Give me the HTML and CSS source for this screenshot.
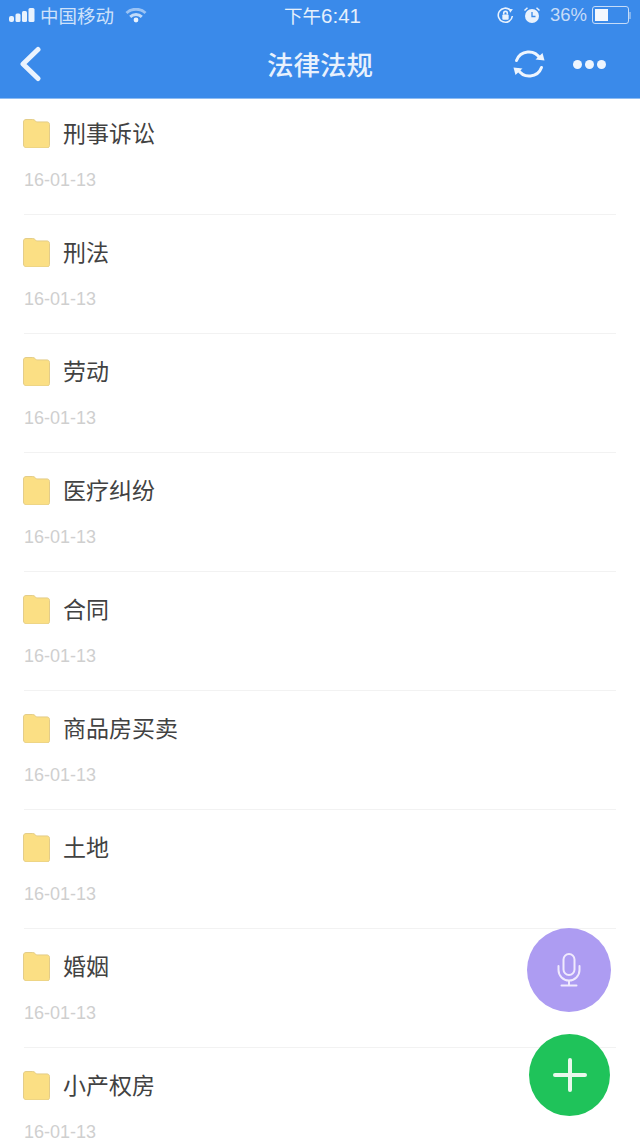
FILE: index.html
```html
<!DOCTYPE html>
<html lang="zh-CN">
<head>
<meta charset="utf-8">
<title>法律法规</title>
<link rel="stylesheet" href="styles.css">
</head>
<body>
<div class="screen">
  <header class="top">
    <div class="status">
      <div class="status-left">
        <svg class="signal" width="26" height="14" viewBox="0 0 26 14"><rect x="0" y="8" width="5" height="6" rx="2"/><rect x="6.500" y="5.500" width="5" height="8.500" rx="1.500"/><rect x="13" y="3" width="5" height="11" rx="1.500"/><rect x="19.500" y="0" width="6" height="14" rx="1.500"/></svg>
        <span class="carrier">中国移动</span>
        <svg class="wifi" width="22" height="15" viewBox="0 0 22 15"><path d="M1.500 5a14 14 0 0 1 19 0" opacity=".6"/><path d="M5.200 8.800a8.600 8.600 0 0 1 11.600 0" opacity=".85"/><circle cx="11" cy="12" r="2.400" class="fill"/></svg>
      </div>
      <div class="clock">下午<span class="clock-digits">6:41</span></div>
      <div class="status-right">
        <svg width="19" height="19" viewBox="0 0 18 18"><path class="thin" d="M15.500 9.500A6.700 6.700 0 1 1 13.600 4"/><path class="fill" d="M12 2.500l4 .6-2.600 3.200z"/><rect class="fill" x="6" y="8" width="6" height="5" rx="1"/><path class="thin" d="M7.300 8V6.800a1.700 1.700 0 0 1 3.400 0V8"/></svg>
        <svg class="alarm" width="18" height="18" viewBox="0 0 18 18"><circle class="fill" cx="9" cy="10" r="7"/><path class="face" d="M9 6v4.500h3.500"/><path class="thin" d="M1.500 4.500L4.500 1.800M16.500 4.500L13.500 1.800"/></svg>
        <span class="percent">36%</span>
        <div class="battery"><div class="battery-level"></div></div>
        <div class="battery-cap"></div>
      </div>
    </div>
    <nav class="bar">
      <svg class="back" width="24" height="36" viewBox="0 0 24 36"><path d="M20 3.500L5 18l15 14.500"/></svg>
      <h1 class="title">法律法规</h1>
      <div class="actions">
        <svg class="sync" width="34" height="34" viewBox="0 0 34 34"><path d="M4.500 13.500A13 13 0 0 1 28 11.500"/><path d="M29.500 20.500A13 13 0 0 1 6 22.500"/><path class="fill" d="M32.500 13.500L23.500 12.500l7-6.500z"/><path class="fill" d="M1.500 20.500l9 1-7 6.500z"/></svg>
        <div class="dots"><i></i><i></i><i></i></div>
      </div>
    </nav>
  </header>

  <ul class="list">
    <li class="row"><div class="name"><svg class="folder" viewBox="0 0 28 30"><path d="M3 .5h7c1.500 0 2 .6 3 1.500l1 1h11c1.400 0 2.500 1.100 2.500 2.500v22c0 1.400-1.100 2.500-2.500 2.500H3C1.600 29.500.5 28.400.5 27V3C.5 1.600 1.600.5 3 .5z"/></svg>刑事诉讼</div><div class="date">16-01-13</div></li>
    <li class="row"><div class="name"><svg class="folder" viewBox="0 0 28 30"><path d="M3 .5h7c1.500 0 2 .6 3 1.500l1 1h11c1.400 0 2.500 1.100 2.500 2.500v22c0 1.400-1.100 2.500-2.500 2.500H3C1.600 29.500.5 28.400.5 27V3C.5 1.600 1.600.5 3 .5z"/></svg>刑法</div><div class="date">16-01-13</div></li>
    <li class="row"><div class="name"><svg class="folder" viewBox="0 0 28 30"><path d="M3 .5h7c1.500 0 2 .6 3 1.500l1 1h11c1.400 0 2.500 1.100 2.500 2.500v22c0 1.400-1.100 2.500-2.500 2.500H3C1.600 29.500.5 28.400.5 27V3C.5 1.600 1.600.5 3 .5z"/></svg>劳动</div><div class="date">16-01-13</div></li>
    <li class="row"><div class="name"><svg class="folder" viewBox="0 0 28 30"><path d="M3 .5h7c1.500 0 2 .6 3 1.500l1 1h11c1.400 0 2.500 1.100 2.500 2.500v22c0 1.400-1.100 2.500-2.500 2.500H3C1.600 29.500.5 28.400.5 27V3C.5 1.600 1.600.5 3 .5z"/></svg>医疗纠纷</div><div class="date">16-01-13</div></li>
    <li class="row"><div class="name"><svg class="folder" viewBox="0 0 28 30"><path d="M3 .5h7c1.500 0 2 .6 3 1.500l1 1h11c1.400 0 2.500 1.100 2.500 2.500v22c0 1.400-1.100 2.500-2.500 2.500H3C1.600 29.500.5 28.400.5 27V3C.5 1.600 1.600.5 3 .5z"/></svg>合同</div><div class="date">16-01-13</div></li>
    <li class="row"><div class="name"><svg class="folder" viewBox="0 0 28 30"><path d="M3 .5h7c1.500 0 2 .6 3 1.500l1 1h11c1.400 0 2.500 1.100 2.500 2.500v22c0 1.400-1.100 2.500-2.500 2.500H3C1.600 29.500.5 28.400.5 27V3C.5 1.600 1.600.5 3 .5z"/></svg>商品房买卖</div><div class="date">16-01-13</div></li>
    <li class="row"><div class="name"><svg class="folder" viewBox="0 0 28 30"><path d="M3 .5h7c1.500 0 2 .6 3 1.500l1 1h11c1.400 0 2.500 1.100 2.500 2.500v22c0 1.400-1.100 2.500-2.500 2.500H3C1.600 29.500.5 28.400.5 27V3C.5 1.600 1.600.5 3 .5z"/></svg>土地</div><div class="date">16-01-13</div></li>
    <li class="row"><div class="name"><svg class="folder" viewBox="0 0 28 30"><path d="M3 .5h7c1.500 0 2 .6 3 1.500l1 1h11c1.400 0 2.500 1.100 2.500 2.500v22c0 1.400-1.100 2.500-2.500 2.500H3C1.600 29.500.5 28.400.5 27V3C.5 1.600 1.600.5 3 .5z"/></svg>婚姻</div><div class="date">16-01-13</div></li>
    <li class="row"><div class="name"><svg class="folder" viewBox="0 0 28 30"><path d="M3 .5h7c1.500 0 2 .6 3 1.500l1 1h11c1.400 0 2.500 1.100 2.500 2.500v22c0 1.400-1.100 2.500-2.500 2.500H3C1.600 29.500.5 28.400.5 27V3C.5 1.600 1.600.5 3 .5z"/></svg>小产权房</div><div class="date">16-01-13</div></li>
  </ul>

  <button class="fab fab-voice" type="button" aria-label="语音">
    <svg width="30" height="36" viewBox="0 0 30 36"><rect x="9.500" y="2" width="11" height="21" rx="5.500"/><path d="M4.500 14v4a10.500 10.500 0 0 0 21 0v-4M15 28.500V33M7.500 33.500h15"/></svg>
  </button>
  <button class="fab fab-add" type="button" aria-label="新建">
    <svg width="34" height="34" viewBox="0 0 34 34"><path d="M17 2v30M2 17h30"/></svg>
  </button>
</div>
</body>
</html>
```
FILE: styles.css
```css
* { box-sizing: border-box; }

html, body {
  margin: 0;
  padding: 0;
  background: #fff;
}

.screen {
  position: relative;
  width: 640px;
  height: 1138px;
  overflow: hidden;
  font-family: "Noto Sans CJK SC", "Noto Sans", sans-serif;
  color: #424242;
}

/* Blue header: status strip and navigation bar */
.top {
  height: 99px;
  background: #3a8aea;
  border-bottom: 1px solid #8dbcf3;
  color: #fff;
}

.status {
  display: grid;
  grid-template-columns: 1fr auto 1fr;
  align-items: center;
  height: 32px;
  padding: 0 9px 2px 9px;
}

.status-left, .status-right {
  display: flex;
  align-items: center;
}

.status-right {
  justify-content: flex-end;
  gap: 8px;
}

.status svg { fill: none; }
.status svg .fill { fill: #e9f2fd; stroke: none; }
.status svg .thin { fill: none; stroke: #e9f2fd; stroke-width: 1.500; }
.status svg .face { fill: none; stroke: #3a8aea; stroke-width: 1.300; }

.signal { fill: #e9f2fd !important; }
.carrier {
  margin-left: 5px;
  font-size: 18.500px;
  line-height: 24px;
  color: #cfe2fa;
}
.wifi {
  margin-left: 11px;
  stroke: #dbe9fb;
  stroke-width: 3;
}

.clock {
  margin-left: 5px;
  font-size: 18.500px;
  line-height: 24px;
  color: #e6f0fc;
}
.clock-digits {
  font-family: "Liberation Sans", sans-serif;
  font-size: 20.500px;
}

.percent {
  font-family: "Liberation Sans", sans-serif;
  font-size: 18.500px;
  color: #c6dcf8;
  margin-left: 1px;
}

.battery {
  width: 37px;
  height: 18px;
  padding: 2px;
  border: 1px solid #c6dcf8;
  border-radius: 3px;
  margin-left: -3px;
}
.battery-level {
  width: 13px;
  height: 100%;
  background: #f4f8fe;
}
.battery-cap {
  width: 2px;
  height: 7px;
  margin-left: -8px;
  background: #7fb2ef;
}

.bar {
  position: relative;
  display: flex;
  align-items: center;
  justify-content: space-between;
  height: 66px;
  padding: 0 34px 2px 18px;
}

.back {
  fill: none;
  stroke: #eaf3fe;
  stroke-width: 5;
  stroke-linecap: round;
  stroke-linejoin: round;
}

.title {
  position: absolute;
  left: 0;
  right: 0;
  margin: 0;
  text-align: center;
  font-size: 26.500px;
  font-weight: 500;
  line-height: 36px;
  color: #e8f1fd;
}

.actions {
  display: flex;
  align-items: center;
  gap: 27px;
}

.sync {
  fill: none;
  stroke: #eef5fe;
  stroke-width: 3;
  stroke-linecap: round;
}
.sync .fill { fill: #eef5fe; stroke: none; }

.dots {
  display: flex;
  gap: 3px;
}
.dots i {
  display: block;
  width: 9px;
  height: 9px;
  border-radius: 50%;
  background: #eef5fe;
}

/* Folder list */
.list {
  list-style: none;
  margin: 0;
  padding: 0 24px;
}

.row {
  height: 119px;
  padding-top: 23px;
  border-bottom: 1px solid #f2f2f2;
}
.row:first-child {
  height: 116px;
  padding-top: 20px;
}

.name {
  display: flex;
  align-items: flex-start;
  gap: 13px;
  height: 29px;
  font-size: 23px;
  line-height: 27px;
}

.folder {
  flex: none;
  width: 27px;
  height: 29px;
  margin-left: -1px;
  fill: #fbdf84;
  stroke: #e2cb85;
  stroke-width: 1;
}

.date {
  margin-top: 20px;
  font-family: "Liberation Sans", sans-serif;
  font-size: 18px;
  line-height: 24px;
  color: #cfcfcf;
}

/* Floating action buttons */
.fab {
  position: absolute;
  display: flex;
  align-items: center;
  justify-content: center;
  padding: 0;
  border: none;
  border-radius: 50%;
}
.fab svg { fill: none; }

.fab-voice {
  left: 527px;
  top: 928px;
  width: 84px;
  height: 84px;
  background: #ad9cf2;
}
.fab-voice svg {
  stroke: #f0eafd;
  stroke-width: 2;
  stroke-linecap: round;
}

.fab-add {
  left: 529px;
  top: 1034px;
  width: 81px;
  height: 82px;
  background: #1fc35a;
}
.fab-add svg {
  stroke: #e9f8ec;
  stroke-width: 4;
  stroke-linecap: round;
}
```
